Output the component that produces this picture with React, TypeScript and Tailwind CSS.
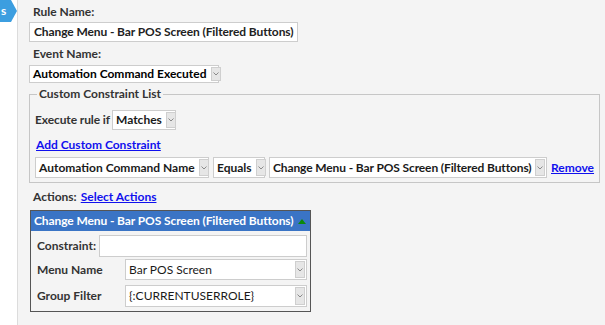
import * as React from 'react';

const font = "font-['Lato',sans-serif]";

function Arrow() {
  return (
    <span className="flex h-full w-[10px] shrink-0 items-center justify-center border border-[#cfcfcf] bg-[#e6e6e6]">
      <svg width="6" height="4" viewBox="0 0 6 4" className="text-[#8a8a8a]">
        <path d="M0.5 0.5 L3 3 L5.5 0.5" fill="none" stroke="currentColor" strokeWidth="1" />
      </svg>
    </span>
  );
}

function Select({ value, className, bold = true }: { value: string; className?: string; bold?: boolean }) {
  return (
    <div
      className={`flex items-center border border-[#cdcdcd] bg-white pl-[3px] pr-[1px] py-[1px] text-[#1a1a1a] ${
        bold ? 'font-bold' : 'font-normal'
      } ${className ?? ''}`}
    >
      <span className="flex-1 whitespace-nowrap pr-[4px] leading-[16px]">{value}</span>
      <Arrow />
    </div>
  );
}

export default function App() {
  return (
    <div className={`flex h-[325px] w-[605px] bg-white text-[12px] text-[#333] ${font}`}>
      {/* left rail with the collapsed tab */}
      <div className="relative w-[18px] shrink-0 border-r border-[#dcdcdc] bg-white">
        <div className="absolute left-0 top-0 flex h-[22px] w-[11px] items-center bg-[#3c9ee0] pl-[1px] text-[12px] font-bold leading-none text-white">
          s
        </div>
        <div className="absolute left-[11px] top-0 h-0 w-0 border-y-[11px] border-l-[6px] border-y-transparent border-l-[#3c9ee0]" />
      </div>

      <div className="flex-1 bg-[#f4f4f4] pl-[11px] pt-[4px]">
        <div className="ml-[4px] font-bold leading-[16px]">Rule Name:</div>
        <div className="mt-[2px] flex h-[20px] w-[269px] items-center whitespace-nowrap border border-[#cdcdcd] bg-white pl-[4px] font-bold tracking-[-0.1px] text-[#222]">
          Change Menu - Bar POS Screen (Filtered Buttons)
        </div>

        <div className="ml-[4px] mt-[4px] font-bold leading-[16px]">Event Name:</div>
        <Select value="Automation Command Executed" className="mt-[3px] h-[18px] w-[190px] text-black" />

        <fieldset className="mt-[4px] mr-[8px] border border-[#c6c6c6] px-[5px] pb-[4px]">
          <legend className="ml-[2px] px-[2px] font-bold leading-[14px]">Custom Constraint List</legend>
          <div className="mt-[9px] flex items-center gap-[2px]">
            <span className="font-bold tracking-[-0.1px]">Execute rule if</span>
            <Select value="Matches" className="h-[20px] w-[64px]" />
          </div>
          <a href="#" className="ml-[1px] mt-[8px] block font-bold leading-[14px] text-[#1010ee] underline">
            Add Custom Constraint
          </a>
          <div className="mt-[5px] flex items-center gap-[4px]">
            <Select value="Automation Command Name" className="h-[21px] w-[174px]" />
            <Select value="Equals" className="h-[21px] w-[52px]" />
            <Select
              value="Change Menu - Bar POS Screen (Filtered Buttons)"
              className="h-[21px] w-[278px] tracking-[-0.12px]"
            />
            <a href="#" className="font-bold text-[#1010ee] underline">Remove</a>
          </div>
        </fieldset>

        <div className="ml-[4px] mt-[6px] flex gap-[4px] font-bold leading-[16px]">
          <span>Actions:</span>
          <a href="#" className="text-[#1010ee] underline">Select Actions</a>
        </div>

        <div className="ml-[1px] mt-[5px] w-[281px] border border-[#555] bg-[#f4f4f4]">
          <div className="flex h-[20px] items-center justify-between whitespace-nowrap bg-[#3a74c5] pl-[3px] pr-[4px] font-bold tracking-[-0.1px] text-white">
            <span>Change Menu - Bar POS Screen (Filtered Buttons)</span>
            <span className="h-0 w-0 border-x-[4px] border-b-[5px] border-x-transparent border-b-[#0b8a0b]" />
          </div>
          <div className="px-[3px] pb-[4px] pt-[4px]">
            <div className="flex items-center">
              <span className="w-[65px] pl-[3px] font-bold">Constraint:</span>
              <div className="h-[22px] flex-1 border border-[#cdcdcd] bg-white" />
            </div>
            <div className="mt-[2px] flex items-center">
              <span className="w-[91px] pl-[3px] font-bold">Menu Name</span>
              <Select value="Bar POS Screen" bold={false} className="h-[21px] flex-1" />
            </div>
            <div className="mt-[5px] flex items-center">
              <span className="w-[91px] pl-[3px] font-bold">Group Filter</span>
              <Select value="{:CURRENTUSERROLE}" bold={false} className="h-[22px] flex-1" />
            </div>
          </div>
        </div>
      </div>
    </div>
  );
}
